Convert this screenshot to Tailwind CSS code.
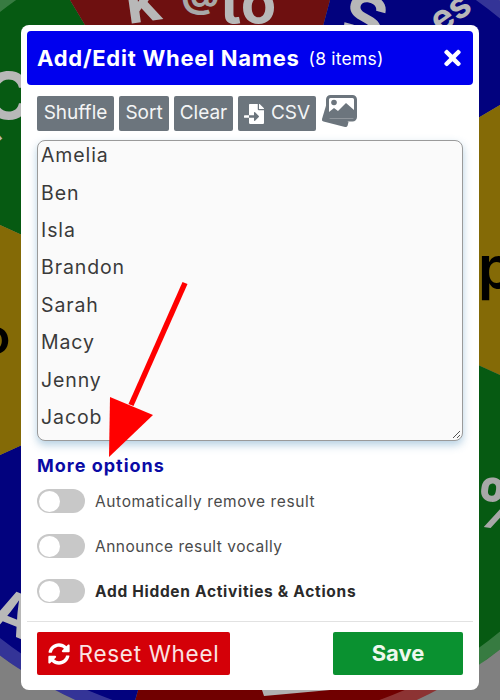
<!doctype html>
<html lang="en">
<head>
<meta charset="utf-8">
<title>Add/Edit Wheel Names</title>
<script src="https://cdn.jsdelivr.net/npm/@tailwindcss/browser@4"></script>
</head>
<body class="m-0">
<div class="relative w-[500px] h-[700px] overflow-hidden bg-[#808080] font-['Inter','Liberation_Sans',sans-serif]">
  <svg class="absolute inset-0" width="500" height="700" viewBox="0 0 500 700">
    <defs><clipPath id="w"><circle cx="246" cy="325" r="412"/></clipPath></defs>
    <g clip-path="url(#w)">
      <polygon fill="#065a12" points="250,300 70,0 -60,0 -60,198 22,235"/>
      <polygon fill="#6e1010" points="250,300 70,0 330,0"/>
      <polygon fill="#02027e" points="250,300 330,0 560,0 560,70 478,118"/>
      <polygon fill="#846a06" points="250,300 478,118 560,70 560,402 478,365"/>
      <polygon fill="#065a12" points="250,300 478,365 560,402 560,760 500,760"/>
      <polygon fill="#700000" points="250,300 500,760 118,760"/>
      <polygon fill="#02027e" points="250,300 118,760 -60,760 -60,482 22,445"/>
      <polygon fill="#846a06" points="250,300 22,445 -60,482 -60,198 22,235"/>
    </g>
    <circle cx="246" cy="325" r="405" fill="none" stroke="#ffffff" stroke-opacity="0.2" stroke-width="14"/>
    <polygon points="262,690 330,690 264,696" fill="#b0b0b0"/>
    <g fill="#b8b8b8" font-family="Inter" font-weight="700">
      <text x="128" y="24" font-size="62" transform="rotate(-8 128 24)">k</text>
      <text x="181" y="7" font-size="38" fill="#a8a8a8">@</text>
      <text x="220" y="23" font-size="58">to</text>
      <text x="338" y="36" font-size="66" transform="rotate(15 338 36)">S</text>
      <text x="440" y="34" font-size="36" transform="rotate(-35 440 34)">es</text>
      <text x="-16" y="119" font-size="64">C</text>
      <text x="-2" y="142" font-size="26" transform="rotate(-40 -2 142)">i</text>
      <text x="-14" y="625" font-size="58" transform="rotate(22 -14 625)">A</text>
      <text x="470" y="525" font-size="68" fill="#a8a8a8" transform="rotate(8 470 525)">%</text>
    </g>
    <g fill="#000" font-family="Inter" font-weight="600">
      <text x="-20" y="354" font-size="50">o</text>
      <text x="478" y="288" font-size="58">p</text>
    </g>
  </svg>

  <div class="relative pt-[25px] pl-[21px]">
    <div class="w-[458px] h-[665px] bg-white rounded-[8px] p-[6px] flex flex-col">
      <div class="h-[54px] bg-[#0000ee] rounded-[4px] pl-[10px] pr-[11px] flex items-center text-white">
        <span class="text-[22px] font-bold tracking-[0.75px]">Add/Edit Wheel Names</span>
        <span class="text-[17.5px] ml-[9px] mt-[2px] tracking-[0.2px]">(8 items)</span>
        <svg class="ml-auto" width="19" height="24" viewBox="0 0 352 512" fill="#fff"><path d="M242.72 256l100.07-100.07c12.28-12.28 12.28-32.19 0-44.48l-22.24-22.24c-12.28-12.28-32.19-12.28-44.48 0L176 189.28 75.93 89.21c-12.28-12.28-32.19-12.28-44.48 0L9.21 111.45c-12.28 12.28-12.28 32.19 0 44.48L109.28 256 9.21 356.07c-12.28 12.28-12.28 32.19 0 44.48l22.24 22.24c12.28 12.28 32.2 12.28 44.48 0L176 322.72l100.07 100.07c12.28 12.28 32.2 12.28 44.48 0l22.24-22.24c12.28-12.28 12.28-32.19 0-44.48L242.72 256z"/></svg>
      </div>

      <div class="px-[10px] flex flex-col flex-1">
        <div class="mt-[11px] flex items-start gap-[5px] text-[#f4f5f6] text-[19px]">
          <button class="w-[77px] h-[35px] bg-[#6c757d] rounded-[2px] flex items-center justify-center">Shuffle</button>
          <button class="w-[50px] h-[35px] bg-[#6c757d] rounded-[2px] flex items-center justify-center">Sort</button>
          <button class="w-[59px] h-[35px] bg-[#6c757d] rounded-[2px] flex items-center justify-center">Clear</button>
          <button class="w-[78px] h-[35px] bg-[#6c757d] rounded-[2px] flex items-center justify-center gap-[7px]">
            <svg width="20" height="20" viewBox="0 0 512 512" fill="#fff"><path d="M16 288c-8.8 0-16 7.2-16 16v32c0 8.8 7.2 16 16 16h112v-64zm489-183L407.1 7c-4.5-4.5-10.6-7-17-7H384v128h128v-6.1c0-6.4-2.5-12.5-7-16.9zm-153 31V0H152c-13.3 0-24 10.7-24 24v264h128v-65.2c0-14.3 17.3-21.4 27.4-11.3L379 308c6.6 6.7 6.6 17.4 0 24l-95.7 96.4c-10.1 10.1-27.4 3-27.4-11.3V352H128v136c0 13.3 10.7 24 24 24h336c13.3 0 24-10.7 24-24V160H376c-13.2 0-24-10.8-24-24z"/></svg>
            <span>CSV</span>
          </button>
          <svg width="36" height="33" viewBox="0 0 36 33" class="-mt-[1px]">
            <path d="M5.5 9 L1 24 Q.5 26 2.5 26.6 L24 32 Q26 32.5 26.6 30.5 L27.5 27 Z" fill="#6c757d"/>
            <rect x="6.5" y="1.5" width="28" height="23.5" rx="3" fill="#fff" stroke="#6c757d" stroke-width="3"/>
            <circle cx="13" cy="7.5" r="2.8" fill="#6c757d"/>
            <path d="M8 23.5 V17 L13 13 L17 16 L25 8 L33 15 V23.5 Z" fill="#6c757d"/>
          </svg>
        </div>

        <div class="mt-[9px] w-[426px] h-[301px] bg-[#fafafa] border border-[#9a9a9a] rounded-[8px] shadow-[0_4px_8px_rgba(90,150,190,0.45)] px-[3px] text-[#3a3a3a] text-[19.5px] leading-[37.4px] tracking-[0.9px] relative">
          <div class="-mt-[3.9px]">Amelia</div>
          <div>Ben</div>
          <div>Isla</div>
          <div>Brandon</div>
          <div>Sarah</div>
          <div>Macy</div>
          <div>Jenny</div>
          <div>Jacob</div>
          <svg class="absolute right-[1px] bottom-[1px]" width="9" height="9" viewBox="0 0 9 9" stroke="#555" stroke-width="1"><path d="M1 8 L8 1 M5 8 L8 5"/></svg>
        </div>

        <div class="mt-[13px] text-[18px] leading-[24px] font-bold tracking-[1px] text-[#0a0aa5]">More options</div>

        <div class="mt-[11px] flex flex-col gap-[21px] text-[15.5px] text-[#4a4a4a]">
          <div class="flex items-center h-[24px]">
            <span class="w-[48px] h-[24px] rounded-full bg-[#c8c8c8] p-[1.5px] flex"><span class="w-[21px] h-[21px] rounded-full bg-white"></span></span>
            <span class="ml-[10px] mt-[1px] tracking-[0.62px]">Automatically remove result</span>
          </div>
          <div class="flex items-center h-[24px]">
            <span class="w-[48px] h-[24px] rounded-full bg-[#c8c8c8] p-[1.5px] flex"><span class="w-[21px] h-[21px] rounded-full bg-white"></span></span>
            <span class="ml-[10px] mt-[1px] tracking-[0.5px]">Announce result vocally</span>
          </div>
          <div class="flex items-center h-[24px]">
            <span class="w-[48px] h-[24px] rounded-full bg-[#c8c8c8] p-[1.5px] flex"><span class="w-[21px] h-[21px] rounded-full bg-white"></span></span>
            <span class="ml-[10px] mt-[1px] font-bold text-[#2a2a2a] tracking-[0.7px]">Add Hidden Activities &amp; Actions</span>
          </div>
        </div>
      </div>

      <div class="border-t border-[#e2e2e2] h-[63px] px-[10px] pt-[10px] flex justify-between items-start">
        <button class="w-[193px] h-[43px] bg-[#d40008] rounded-[2px] text-[#fbe3e3] text-[22.5px] tracking-[0.7px] flex items-center justify-center gap-[9px]">
          <svg width="22" height="22" viewBox="0 0 512 512" fill="#fff"><path d="M370.72 133.28C339.458 104.008 298.888 87.962 255.848 88c-77.458.068-144.328 53.178-162.791 126.85-1.344 5.363-6.122 9.15-11.651 9.15H24.103c-7.498 0-13.194-6.807-11.807-14.176C33.933 94.924 134.813 8 256 8c66.448 0 126.791 26.136 171.315 68.685L463.03 40.97C478.149 25.851 504 36.559 504 57.941V192c0 13.255-10.745 24-24 24H345.941c-21.382 0-32.09-25.851-16.971-40.971l41.75-41.749zM32 296h134.059c21.382 0 32.09 25.851 16.971 40.971l-41.75 41.75c31.262 29.273 71.835 45.319 114.876 45.28 77.418-.07 144.315-53.144 162.787-126.849 1.344-5.363 6.122-9.15 11.651-9.15h57.304c7.498 0 13.194 6.807 11.807 14.176C478.067 417.076 377.187 504 256 504c-66.448 0-126.791-26.136-171.315-68.685L48.97 471.03C33.851 486.149 8 475.441 8 454.059V320c0-13.255 10.745-24 24-24z"/></svg>
          <span>Reset Wheel</span>
        </button>
        <button class="w-[130px] h-[43px] bg-[#0a9130] rounded-[2px] text-[#eef8ee] text-[22px] font-bold flex items-center justify-center">Save</button>
      </div>
    </div>
  </div>

  <svg class="absolute inset-0 pointer-events-none" width="500" height="700" viewBox="0 0 500 700">
    <line x1="185" y1="283" x2="131" y2="405" stroke="#ff0000" stroke-width="5.5"/>
    <polygon points="110,397 153,415 109,457" fill="#ff0000"/>
  </svg>
</div>
</body>
</html>
